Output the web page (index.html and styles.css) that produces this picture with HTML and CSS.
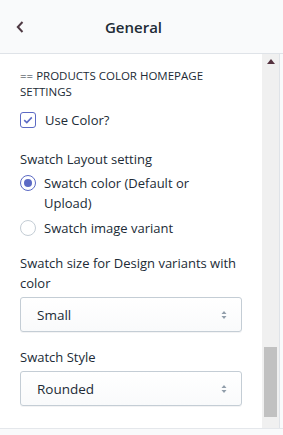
FILE: index.html
```html
<!DOCTYPE html>
<html lang="en">
<head>
  <meta charset="UTF-8">
  <title>General</title>
  <link rel="stylesheet" href="styles.css">
</head>
<body>
  <div class="header">
    <svg class="back" width="8" height="12" viewBox="0 0 8 12"><path d="M6.5 1 L1.8 6 L6.5 11" fill="none" stroke="#4f3a44" stroke-width="2"/></svg>
    <h1>General</h1>
  </div>

  <div class="main">
    <div class="panel">
      <div class="section-title">== PRODUCTS COLOR HOMEPAGE SETTINGS</div>

      <label class="check">
        <span class="box">
          <svg width="10" height="8" viewBox="0 0 10 8"><path d="M1.2 4.2 L3.8 6.6 L8.8 1.4" fill="none" stroke="#5c6ac4" stroke-width="1.6"/></svg>
        </span>
        Use Color?
      </label>

      <div class="field first">
        <div class="label">Swatch Layout setting</div>
        <label class="radio">
          <span class="dot on"></span>
          <span class="text">Swatch color (Default or Upload)</span>
        </label>
        <label class="radio">
          <span class="dot"></span>
          <span class="text">Swatch image variant</span>
        </label>
      </div>

      <div class="field">
        <div class="label">Swatch size for Design variants with color</div>
        <div class="select">
          <span>Small</span>
          <svg width="6" height="10" viewBox="0 0 6 10"><path d="M0.5 4 L3 1 L5.5 4 Z M0.5 6 L3 9 L5.5 6 Z" fill="#919eab"/></svg>
        </div>
      </div>

      <div class="field">
        <div class="label">Swatch Style</div>
        <div class="select">
          <span>Rounded</span>
          <svg width="6" height="10" viewBox="0 0 6 10"><path d="M0.5 4 L3 1 L5.5 4 Z M0.5 6 L3 9 L5.5 6 Z" fill="#919eab"/></svg>
        </div>
      </div>
    </div>

    <div class="scrollbar">
      <svg class="arrow" width="8" height="5" viewBox="0 0 8 5"><path d="M0 5 L4 0 L8 5 Z" fill="#55323f"/></svg>
      <div class="thumb"></div>
    </div>
    <div class="edge"></div>
  </div>
</body>
</html>
```

FILE: styles.css
```css
body {
  margin: 0;
  width: 283px;
  height: 435px;
  overflow: hidden;
  font-family: "Open Sans", "Noto Sans", sans-serif;
  color: #212b36;
  background-color: #f9fafb;
}
.header {
  height: 53px;
  border-bottom: 1px solid #dfe3e8;
  background-color: #f9fafb;
  display: flex;
  align-items: center;
  padding-left: 16px;
}
.header .back {
  flex: none;
}
.header h1 {
  flex: 1;
  margin: 0 0 0 -24px;
  text-align: center;
  font-size: 15px;
  font-weight: 600;
  padding-right: 16px;
}
.main {
  display: flex;
  height: 374px;
  border-bottom: 1px solid #e4e7eb;
}
.panel {
  width: 223px;
  background-color: #fff;
  padding: 14px 20px 0 20px;
  font-size: 13px;
  line-height: 20px;
}
.section-title {
  font-size: 11.5px;
  line-height: 16px;
  text-transform: uppercase;
  margin-bottom: 10px;
}
.check {
  display: flex;
  align-items: center;
  gap: 9px;
}
.box {
  width: 14px;
  height: 14px;
  border: 1px solid #5c6ac4;
  border-radius: 3px;
  display: flex;
  align-items: center;
  justify-content: center;
}
.field {
  margin-top: 15px;
}
.field.first {
  margin-top: 19px;
}
.label {
  margin-bottom: 4px;
}
.radio {
  display: flex;
  align-items: flex-start;
  gap: 8px;
  margin-bottom: 5px;
}
.radio .text {
  max-width: 175px;
}
.dot {
  flex: none;
  width: 14px;
  height: 14px;
  margin-top: 2px;
  border: 1px solid #c4cdd5;
  border-radius: 50%;
  position: relative;
}
.dot.on {
  border-color: #5c6ac4;
}
.dot.on::after {
  content: "";
  position: absolute;
  left: 3px;
  top: 3px;
  width: 8px;
  height: 8px;
  border-radius: 50%;
  background-color: #5c6ac4;
}
.select {
  height: 33px;
  border: 1px solid #c4cdd5;
  border-radius: 3px;
  background: linear-gradient(#fff, #f9fafb);
  box-shadow: 0 1px 0 rgba(22, 29, 37, 0.05);
  display: flex;
  align-items: center;
  justify-content: space-between;
  padding: 0 14px 0 16px;
  font-size: 13.5px;
}
.scrollbar {
  width: 17px;
  background-color: #f0f0f0;
  display: flex;
  flex-direction: column;
  align-items: center;
}
.scrollbar .arrow {
  margin-top: 5px;
}
.thumb {
  width: 13px;
  height: 70px;
  margin-top: 283px;
  background-color: #c1c1c1;
}
.edge {
  width: 3px;
  border-left: 1px solid #dfe3e8;
  background-color: #f9fafb;
}
```
